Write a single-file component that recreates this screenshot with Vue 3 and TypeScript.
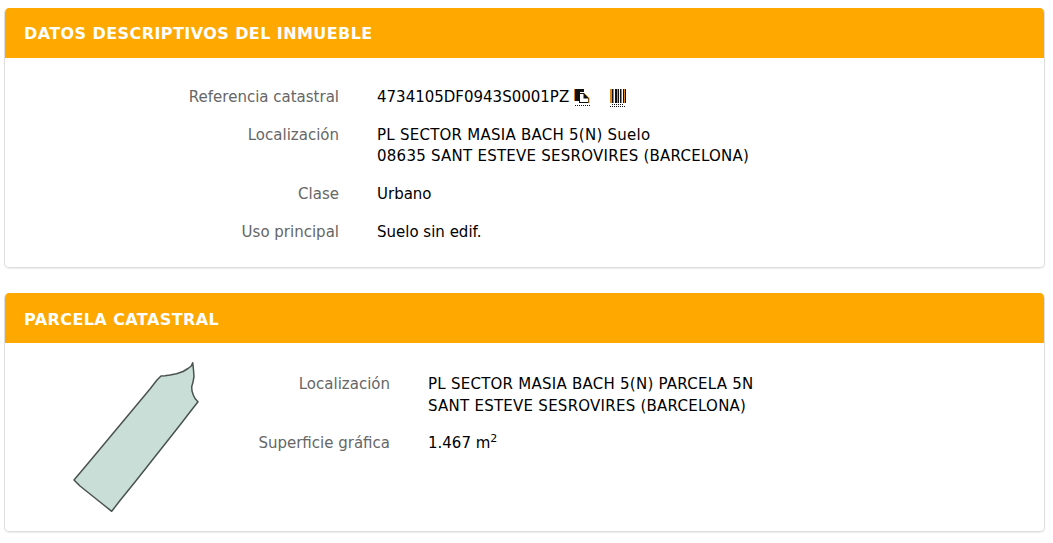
<script setup lang="ts">
interface Row { label: string; lines: string[]; sup?: string; icons?: boolean; wide?: boolean }
const first: Row[] = [
  { label: 'Referencia catastral', lines: ['4734105DF0943S0001PZ'], icons: true },
  { label: 'Localización', lines: ['PL SECTOR MASIA BACH 5(N) Suelo', '08635 SANT ESTEVE SESROVIRES (BARCELONA)'], wide: true },
  { label: 'Clase', lines: ['Urbano'] },
  { label: 'Uso principal', lines: ['Suelo sin edif.'] },
]
const second: Row[] = [
  { label: 'Localización', lines: ['PL SECTOR MASIA BACH 5(N) PARCELA 5N', 'SANT ESTEVE SESROVIRES (BARCELONA)'], wide: true },
  { label: 'Superficie gráfica', lines: ['1.467 m'], sup: '2' },
]
const bars = [
  [0, '#e08a1e'], [1, '#e08a1e'], [2, '#111'], [3, '#4a9ad4'], [5, '#111'], [6, '#111'], [7, '#e08a1e'], [8, '#111'],
  [10, '#111'], [11, '#4a9ad4'], [13, '#111'], [14, '#e08a1e'], [15, '#111'],
] as [number, string][]
</script>

<template>
  <main class="page">
    <section class="card first">
      <h2 class="head">DATOS DESCRIPTIVOS DEL INMUEBLE</h2>
      <div class="rows rows-a">
        <template v-for="r in first" :key="r.label">
          <div class="label">{{ r.label }}</div>
          <div class="value" :class="{ wide: r.wide }">
            <div v-for="l in r.lines" :key="l" class="line">
              {{ l }}<span v-if="r.icons" class="icons">
                <svg class="ico" width="16" height="18" viewBox="0 0 16 18">
                  <path d="M0 0h1v12H0z" fill="#e08a1e" />
                  <path d="M1 0h9v3H6v9H1z" fill="#111" />
                  <path d="M5 4h5l5 5v5H5z" fill="#111" />
                  <path d="M6 5h3.500v4.500H14V13H6z" fill="#fff" />
                  <path d="M10.500 4.500l4.500 4.500v5" fill="none" stroke="#e08a1e" />
                  <path d="M1 16.500h15" stroke="#111" stroke-dasharray="1 1" />
                </svg>
                <svg class="ico" width="16" height="18" viewBox="0 0 16 18">
                  <rect v-for="b in bars" :key="b[0]" :x="b[0]" y="0" width="1" height="14" :fill="b[1]" />
                  <path d="M2 15.500h12M0 17.500h16" stroke="#111" stroke-dasharray="1 1" />
                </svg>
              </span>
            </div>
          </div>
        </template>
      </div>
    </section>

    <section class="card second">
      <h2 class="head">PARCELA CATASTRAL</h2>
      <div class="parcel">
        <svg class="plot" width="150" height="170" viewBox="60 350 150 170">
          <path
            d="M192.700 362.700L191.300 366 188 368.500 183 371.500 176.500 373.800 170 375 165 375.800 161 376 157 380 150 389 140 401 125 419 110 437 95 455 82 470.500 74 480 80 486 90 494 100 502 111.700 511.300 120 500.500 135 482 150 463 165 444 180 425 190 412 198 401.700 195 398.500 193.300 395 192 391 191.700 386.700 193 382 194 376.700 193.500 370z"
            fill="#c8ded7"
            stroke="#4a524e"
            stroke-width="1.500"
            stroke-linejoin="round"
          />
        </svg>
        <div class="rows rows-b">
          <template v-for="r in second" :key="r.label">
            <div class="label">{{ r.label }}</div>
            <div class="value" :class="{ wide: r.wide }">
              <div v-for="l in r.lines" :key="l" class="line">{{ l }}<sup v-if="r.sup">{{ r.sup }}</sup></div>
            </div>
          </template>
        </div>
      </div>
    </section>
  </main>
</template>

<style scoped>
.page {
  width: 1053px;
  height: 543px;
  box-sizing: border-box;
  padding: 8px 8px 0 4px;
  display: flex;
  flex-direction: column;
  gap: 25px;
  background: #fff;
  font-family: "DejaVu Sans", "Liberation Sans", sans-serif;
  overflow: hidden;
}
.card {
  box-sizing: border-box;
  border: 1px solid #dedede;
  border-top: 0;
  border-radius: 5px;
  box-shadow: 0 1px 1px rgba(0, 0, 0, 0.08);
  overflow: hidden;
}
.first { height: 260px; }
.second { height: 239px; }
.head {
  height: 50px;
  padding-left: 19px;
  line-height: 52px;
  margin: 0;
  background: #ffa800;
  color: #fff;
  font-size: 16px;
  font-weight: 700;
  letter-spacing: 0.42px;
}
.second .head { line-height: 54px; }
.rows {
  display: grid;
  font-size: 15px;
}
.wide { letter-spacing: 0.25px; }
.rows-a {
  grid-template-columns: 334px 1fr;
  column-gap: 38px;
  row-gap: 17px;
  line-height: 21px;
  padding-top: 29px;
}
.parcel { display: flex; }
.plot { flex: none; margin: 7px 0 0 55px; }
.rows-b {
  flex: 1;
  grid-template-columns: 180px 1fr;
  column-gap: 38px;
  row-gap: 15px;
  line-height: 22px;
  padding-top: 30px;
  align-content: start;
}
.label { text-align: right; color: #666; }
.value { color: #000; }
.line { white-space: nowrap; }
sup { font-size: 11px; line-height: 0; }
.icons { display: inline-flex; gap: 20px; margin-left: 5px; vertical-align: -5px; }
.ico { display: block; }
</style>
